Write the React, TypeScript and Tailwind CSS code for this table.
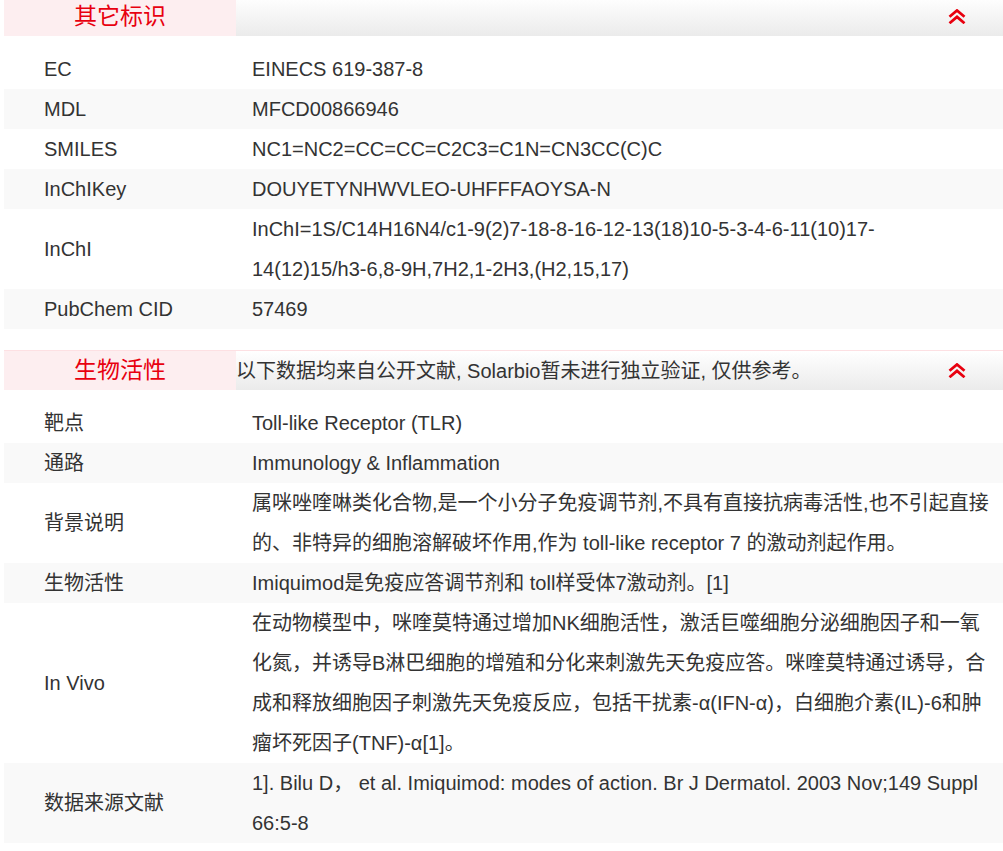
import React from "react";

type Row = { label: string; value: React.ReactNode };

const rows1: Row[] = [
  { label: "EC", value: "EINECS 619-387-8" },
  { label: "MDL", value: "MFCD00866946" },
  { label: "SMILES", value: "NC1=NC2=CC=CC=C2C3=C1N=CN3CC(C)C" },
  { label: "InChIKey", value: "DOUYETYNHWVLEO-UHFFFAOYSA-N" },
  {
    label: "InChI",
    value: (
      <>
        InChI=1S/C14H16N4/c1-9(2)7-18-8-16-12-13(18)10-5-3-4-6-11(10)17-
        <br />
        14(12)15/h3-6,8-9H,7H2,1-2H3,(H2,15,17)
      </>
    ),
  },
  { label: "PubChem CID", value: "57469" },
];

const rows2: Row[] = [
  { label: "靶点", value: "Toll-like Receptor (TLR)" },
  { label: "通路", value: "Immunology & Inflammation" },
  {
    label: "背景说明",
    value:
      "属咪唑喹啉类化合物,是一个小分子免疫调节剂,不具有直接抗病毒活性,也不引起直接的、非特异的细胞溶解破坏作用,作为 toll-like receptor 7 的激动剂起作用。",
  },
  { label: "生物活性", value: "Imiquimod是免疫应答调节剂和 toll样受体7激动剂。[1]" },
  {
    label: "In Vivo",
    value:
      "在动物模型中，咪喹莫特通过增加NK细胞活性，激活巨噬细胞分泌细胞因子和一氧化氮，并诱导B淋巴细胞的增殖和分化来刺激先天免疫应答。咪喹莫特通过诱导，合成和释放细胞因子刺激先天免疫反应，包括干扰素-α(IFN-α)，白细胞介素(IL)-6和肿瘤坏死因子(TNF)-α[1]。",
  },
  {
    label: "数据来源文献",
    value: "1]. Bilu D，\u00a0et al. Imiquimod: modes of action. Br J Dermatol. 2003 Nov;149 Suppl 66:5-8",
  },
];

function Chevrons() {
  return (
    <svg width="18" height="15" viewBox="0 0 18 15" className="shrink-0">
      <polyline points="1.5,7.8 9,1.5 16.5,7.8" fill="none" stroke="#e8000f" strokeWidth="2.8" />
      <polyline points="1.5,14.2 9,7.9 16.5,14.2" fill="none" stroke="#e8000f" strokeWidth="2.8" />
    </svg>
  );
}

function Header({ title, desc }: { title: string; desc?: string }) {
  return (
    <div className="flex h-[40px] border-t border-[#fde0e3]">
      <div className="w-[232px] shrink-0 bg-[#fdeef0] flex items-center justify-center text-[23px] text-[#e8000f]">
        {title}
      </div>
      <div className="flex-1 flex items-center bg-gradient-to-b from-white to-[#ebebeb] pr-[37px]">
        <span className="text-[20px] text-[#333] whitespace-nowrap">{desc}</span>
        <div className="ml-auto">
          <Chevrons />
        </div>
      </div>
    </div>
  );
}

function Table({ rows }: { rows: Row[] }) {
  return (
    <div className="mt-[13px]">
      {rows.map((r, i) => (
        <div
          key={r.label}
          className={`flex items-center min-h-[40px] ${i % 2 === 1 ? "bg-[#f9f9f9]" : "bg-white"}`}
        >
          <div className="w-[248px] shrink-0 pl-10 leading-[40px]">{r.label}</div>
          <div className="w-[740px] shrink-0 leading-[40px]">{r.value}</div>
        </div>
      ))}
    </div>
  );
}

export default function App() {
  return (
    <div className="bg-white h-[851px] overflow-hidden">
      <div
        className="ml-1 w-[999px] -mt-1 text-[20px] text-[#333]"
        style={{ fontFamily: '"Liberation Sans", Arial, "Noto Sans CJK SC", sans-serif' }}
      >
        <Header title="其它标识" />
        <Table rows={rows1} />
        <div className="mt-[21px]">
          <Header
            title="生物活性"
            desc="以下数据均来自公开文献, Solarbio暂未进行独立验证, 仅供参考。"
          />
          <Table rows={rows2} />
        </div>
      </div>
    </div>
  );
}
